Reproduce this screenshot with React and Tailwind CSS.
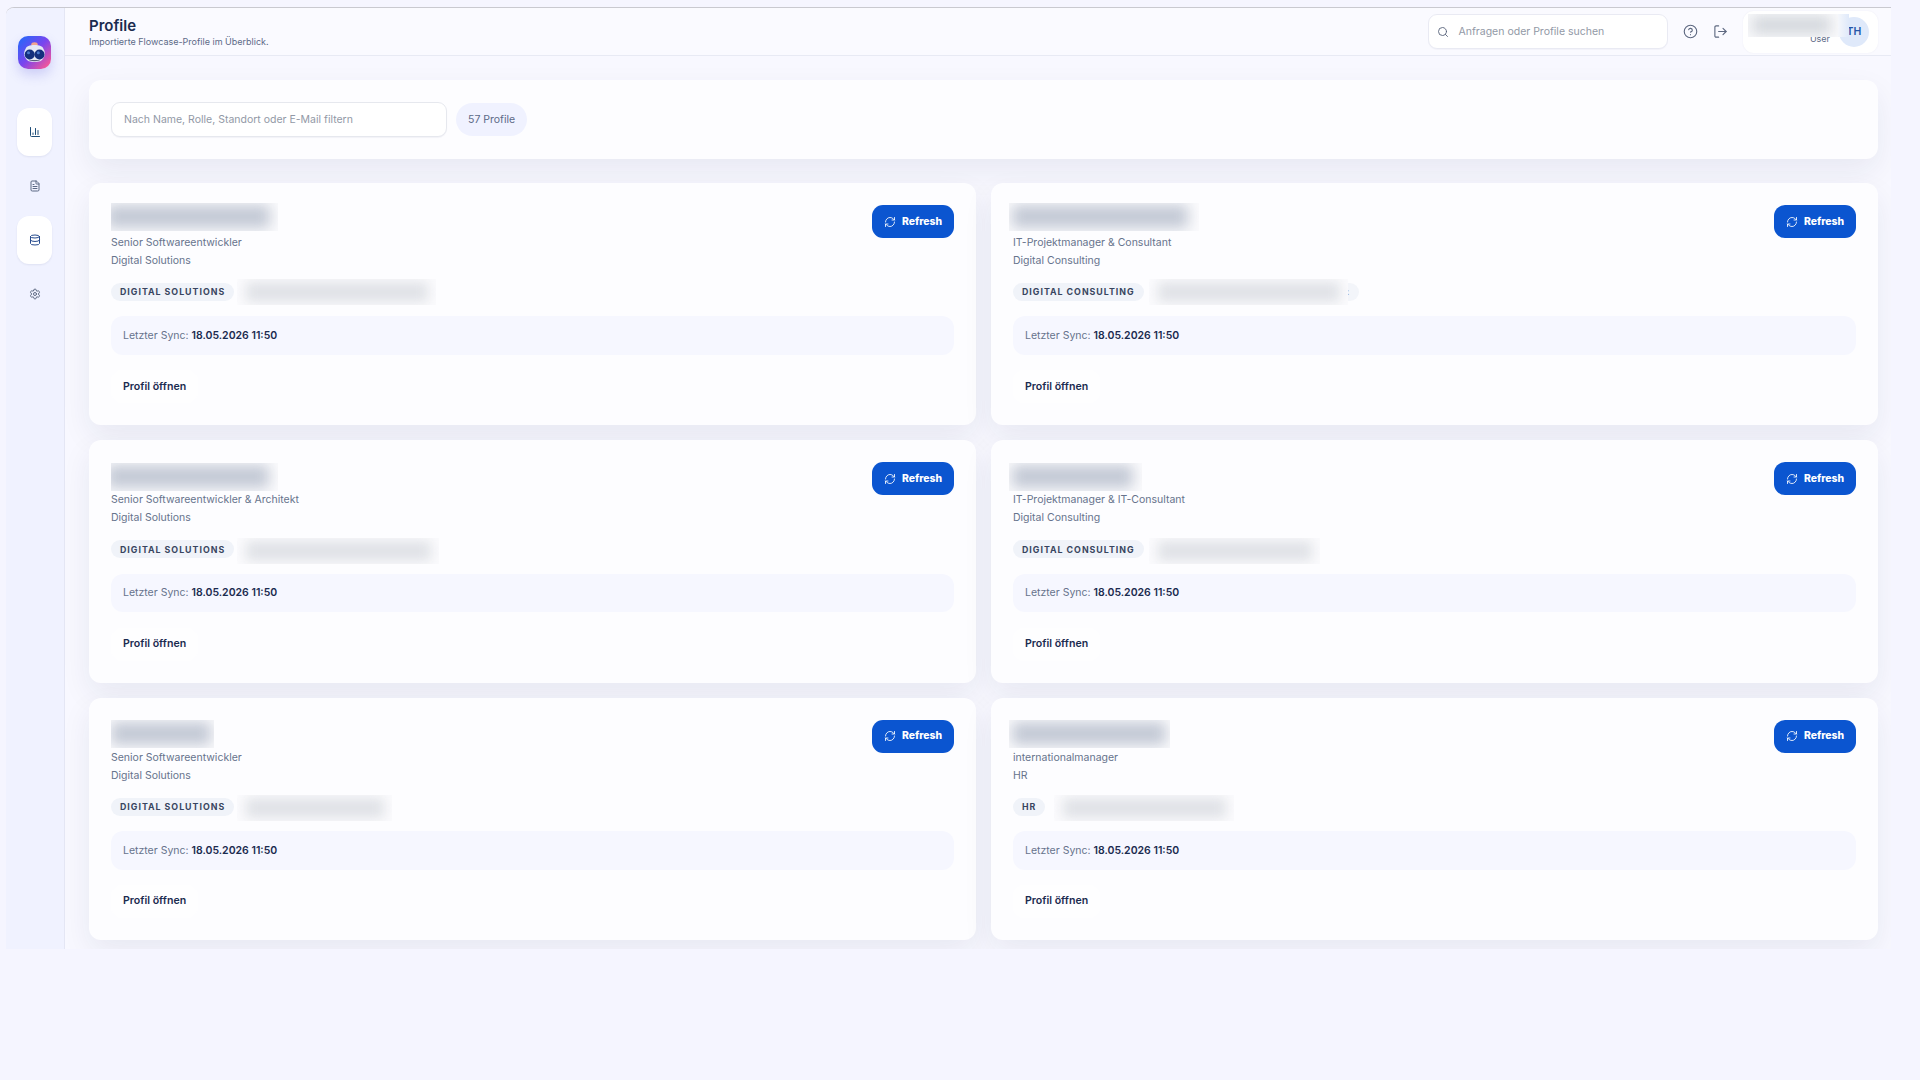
import React from "react";
import {
  ChartColumn,
  FileText,
  Database,
  Settings,
  Search,
  CircleHelp,
  LogOut,
  RefreshCw,
} from "lucide-react";

const navItems = [
  { name: "Dashboard", icon: ChartColumn, active: true, color: "text-[#1f4e79]" },
  { name: "Anfragen", icon: FileText, active: false, color: "text-[#5b6883]" },
  { name: "Profile", icon: Database, active: true, color: "text-[#274c8e]" },
  { name: "Einstellungen", icon: Settings, active: false, color: "text-[#5f6b84]" },
];

// nameMask / mailMask hold the size of the area that hides personal data
const profiles = [
  {
    role: "Senior Softwareentwickler",
    unit: "Digital Solutions",
    nameMask: "left-0 -top-[2px] w-[167px]",
    nameInk: "-left-[4px] right-[8px]",
    mailMask: "left-[3px] -top-[4px] w-[199px]",
  },
  {
    role: "IT-Projektmanager & Consultant",
    unit: "Digital Consulting",
    nameMask: "-left-[4px] -top-[2px] w-[190px]",
    nameInk: "left-[3px] right-[11px]",
    mailMask: "left-[5px] -top-[4px] w-[199px]",
    mailTail: true,
  },
  {
    role: "Senior Softwareentwickler & Architekt",
    unit: "Digital Solutions",
    nameMask: "left-0 top-[1px] w-[167px]",
    nameInk: "-left-[4px] right-[9px]",
    mailMask: "left-[3px] -top-[2px] w-[202px]",
  },
  {
    role: "IT-Projektmanager & IT-Consultant",
    unit: "Digital Consulting",
    nameMask: "-left-[4px] top-[1px] w-[133px]",
    nameInk: "left-[3px] right-[9px]",
    mailMask: "left-[5px] -top-[2px] w-[171px]",
  },
  {
    role: "Senior Softwareentwickler",
    unit: "Digital Solutions",
    nameMask: "left-0 top-0 w-[103px]",
    nameInk: "left-0 right-[3px]",
    mailMask: "left-[3px] -top-[3px] w-[155px]",
  },
  {
    role: "internationalmanager",
    unit: "HR",
    nameMask: "-left-[4px] top-0 w-[161px]",
    nameInk: "left-[3px] right-[4px]",
    mailMask: "left-[9px] -top-[3px] w-[180px]",
  },
];

function Logo() {
  return (
    <svg
      viewBox="0 0 33 33"
      className="w-[33px] h-[33px] rounded-[10px] shadow-[0_6px_12px_rgba(80,80,220,0.22)]"
    >
      <defs>
        <linearGradient id="logoBg" x1="0" y1="0" x2="1" y2="1">
          <stop offset="0" stopColor="#1d6cfb" />
          <stop offset="0.5" stopColor="#7a45ee" />
          <stop offset="0.9" stopColor="#f0559c" />
        </linearGradient>
      </defs>
      <rect width="33" height="33" fill="url(#logoBg)" />
      <ellipse cx="16.5" cy="8.2" rx="3.2" ry="2" fill="#f2a58f" />
      <path
        d="M7.500 13C8.500 10 11.500 9 16.500 9s8 1 9 4c1.700 2.500 2 6.500 0 9-1.500 3-4.500 4-9 4s-7.500-1-9-4c-2-2.500-1.700-6.500 0-9z"
        fill="#e4e9f6"
      />
      <path d="M10 23.500c3 .8 10 .8 13 0-2 2.200-11 2.200-13 0z" fill="#59617c" />
      <circle cx="11.700" cy="18.500" r="5" fill="#142f7d" />
      <circle cx="21.500" cy="18.500" r="5" fill="#142f7d" />
      <circle cx="10.500" cy="16.800" r="1.500" fill="#4878cc" />
      <circle cx="20.300" cy="16.800" r="1.500" fill="#4878cc" />
    </svg>
  );
}

function Sidebar() {
  return (
    <aside className="w-[59px] shrink-0 flex flex-col items-center border-r border-[#e4e6f4] bg-[#f0f2ff] pt-[28px] pr-[1px]">
      <Logo />
      <nav className="mt-[39px] flex flex-col gap-[6px]">
        {navItems.map((item) => {
          const Icon = item.icon;
          return (
            <a
              key={item.name}
              className={`flex h-[48px] w-[35px] items-center justify-center rounded-[12px] ${item.color} ${
                item.active ? "bg-white shadow-[0_1px_2px_rgba(30,40,90,0.08)]" : ""
              }`}
            >
              <Icon size={12} strokeWidth={2} />
            </a>
          );
        })}
      </nav>
    </aside>
  );
}

function Header() {
  return (
    <header className="flex h-[48px] shrink-0 items-center justify-between border-b border-[#e8eaf4] bg-[#fafaff] pl-[24px] pr-[13px]">
      <div className="mt-px">
        <h1 className="text-[15px] leading-[20px] font-semibold text-[#1b2b4f]">Profile</h1>
        <p className="text-[9px] leading-[12px] text-[#5d6a87]">
          Importierte Flowcase-Profile im Überblick.
        </p>
      </div>

      <div className="flex items-center">
        <div className="flex h-[35px] w-[240px] items-center rounded-[9px] border border-[#e9eaf3] bg-white pl-[8px] shadow-[0_1px_1px_rgba(30,40,90,0.03)]">
          <Search size={12} strokeWidth={1.8} className="text-[#566178]" />
          <span className="ml-[9.500px] text-[10.500px] text-[#9299a6]">Anfragen oder Profile suchen</span>
        </div>
        <CircleHelp size={15} strokeWidth={1.8} className="ml-[15px] text-[#5d6880]" />
        <LogOut size={15} strokeWidth={1.8} className="ml-[15px] text-[#5d6880]" />

        {/* User card */}
        <div className="relative ml-[15px] flex h-[42px] w-[135px] items-center justify-end rounded-[11px] bg-white pr-[9px] shadow-[0_0_2px_rgba(30,40,90,0.06)]">
          <span className="mr-[9px] mt-[15px] text-[9px] leading-[12px] text-[#5d6a87]">User</span>
          <span className="flex h-[30px] w-[30px] items-center justify-center rounded-full bg-[#dfe9fa] text-[10.500px] font-semibold text-[#2456a8]">
            TH
          </span>
          <div className="absolute left-[5px] top-[3px] h-[23px] w-[90px] overflow-hidden bg-[#fafafc]">
            <div className="absolute left-[4px] right-[7px] top-[2px] h-[18px] bg-[#d3d7dc] blur-[7px]"></div>
          </div>
          <div className="absolute left-[95px] top-[3px] h-[23px] w-[11px] bg-linear-to-r from-[#f5f7fb] to-[#dfe9fa]"></div>
        </div>
      </div>
    </header>
  );
}

function ProfileCard({ profile }) {
  return (
    <article className="relative flex flex-col rounded-[12px] bg-[#fdfdff] p-[22px] shadow-[0_12px_30px_rgba(25,40,80,0.075)]">
      <div className="flex h-[65px] items-start justify-between">
        <div className="text-[10.500px] leading-[18px] text-[#66738c]">
          <div className="relative h-[29px]">
            <div className={`absolute h-[28px] overflow-hidden bg-[#fbfbfd] ${profile.nameMask}`}>
              <div
                className={`absolute top-[2px] h-[23px] bg-[#c3c9d5] blur-[7px] ${profile.nameInk}`}
              ></div>
            </div>
          </div>
          <p>{profile.role}</p>
          <p>{profile.unit}</p>
        </div>
        <button className="flex h-[33px] w-[82px] items-center justify-center gap-[6px] rounded-[11px] bg-[#0b55d0] text-[10.400px] font-extrabold text-white">
          <RefreshCw size={12} strokeWidth={1.7} />
          Refresh
        </button>
      </div>

      <div className="mt-[13px] flex h-[18px]">
        <span className="flex items-center rounded-full bg-[#f0f3f9] px-[9px] text-[8.800px] font-bold uppercase tracking-[1px] text-[#38455f]">
          {profile.unit}
        </span>
        <div className="relative h-[18px]">
          {profile.mailTail && (
            <span className="absolute left-[194px] top-0 flex h-[18px] w-[21px] items-center justify-center rounded-r-full bg-[#f3f5fa] text-[9px] text-[#9aa3b4]">
              :
            </span>
          )}
          <div className={`absolute h-[26px] overflow-hidden bg-[#fbfbfd] ${profile.mailMask}`}>
            <div className="absolute left-[9px] right-[8px] top-[3px] h-[20px] bg-[#e0e2e7] blur-[6px]"></div>
          </div>
        </div>
      </div>

      <div className="mt-[15.400px] flex h-[39px] items-center rounded-[12px] bg-[#f6f7ff] px-[12px] pt-[0.600px] text-[10.500px] text-[#66738c]">
        Letzter Sync:&nbsp;<strong className="font-semibold text-[#1b2b4f]">18.05.2026 11:50</strong>
      </div>

      <button className="mt-[15.350px] flex h-[33px] items-center self-start rounded-[11px] bg-[#fefeff] px-[12px] text-[10.600px] font-semibold text-[#1b2b4f]">
        Profil öffnen
      </button>
    </article>
  );
}

export default function App() {
  return (
    <div className="h-[1080px] w-[1920px] overflow-hidden bg-[#f5f5ff] pl-[6px] pt-[7px] font-['Inter',sans-serif]">
      <div className="flex h-[942px] w-[1885px] overflow-hidden rounded-tl-[8px] border-t border-[#c9c9d0] bg-[#f8f8ff]">
        <Sidebar />
        <main className="flex min-w-0 flex-1 flex-col">
          <Header />

          <div className="flex flex-col gap-[24px] pl-[24px] pr-[13px] pt-[24px]">
            <section className="flex h-[79px] items-center rounded-[12px] bg-[#fdfdff] pl-[22px] shadow-[0_12px_30px_rgba(25,40,80,0.075)]">
              <div className="flex h-[35px] w-[336px] items-center rounded-[9px] border border-[#e6e8ee] bg-white pl-[12px] text-[10.500px] text-[#9299a6] shadow-[0_1px_1px_rgba(30,40,90,0.05)]">
                Nach Name, Rolle, Standort oder E-Mail filtern
              </div>
              <span className="ml-[9px] flex h-[33px] items-center rounded-full bg-[#f0f2ff] px-[12px] text-[10.500px] text-[#5d6a87]">
                57 Profile
              </span>
            </section>

            <section className="grid grid-cols-2 auto-rows-[242.250px] gap-[15px]">
              {profiles.map((profile, idx) => (
                <ProfileCard key={idx} profile={profile} />
              ))}
            </section>
          </div>
        </main>
      </div>
    </div>
  );
}
